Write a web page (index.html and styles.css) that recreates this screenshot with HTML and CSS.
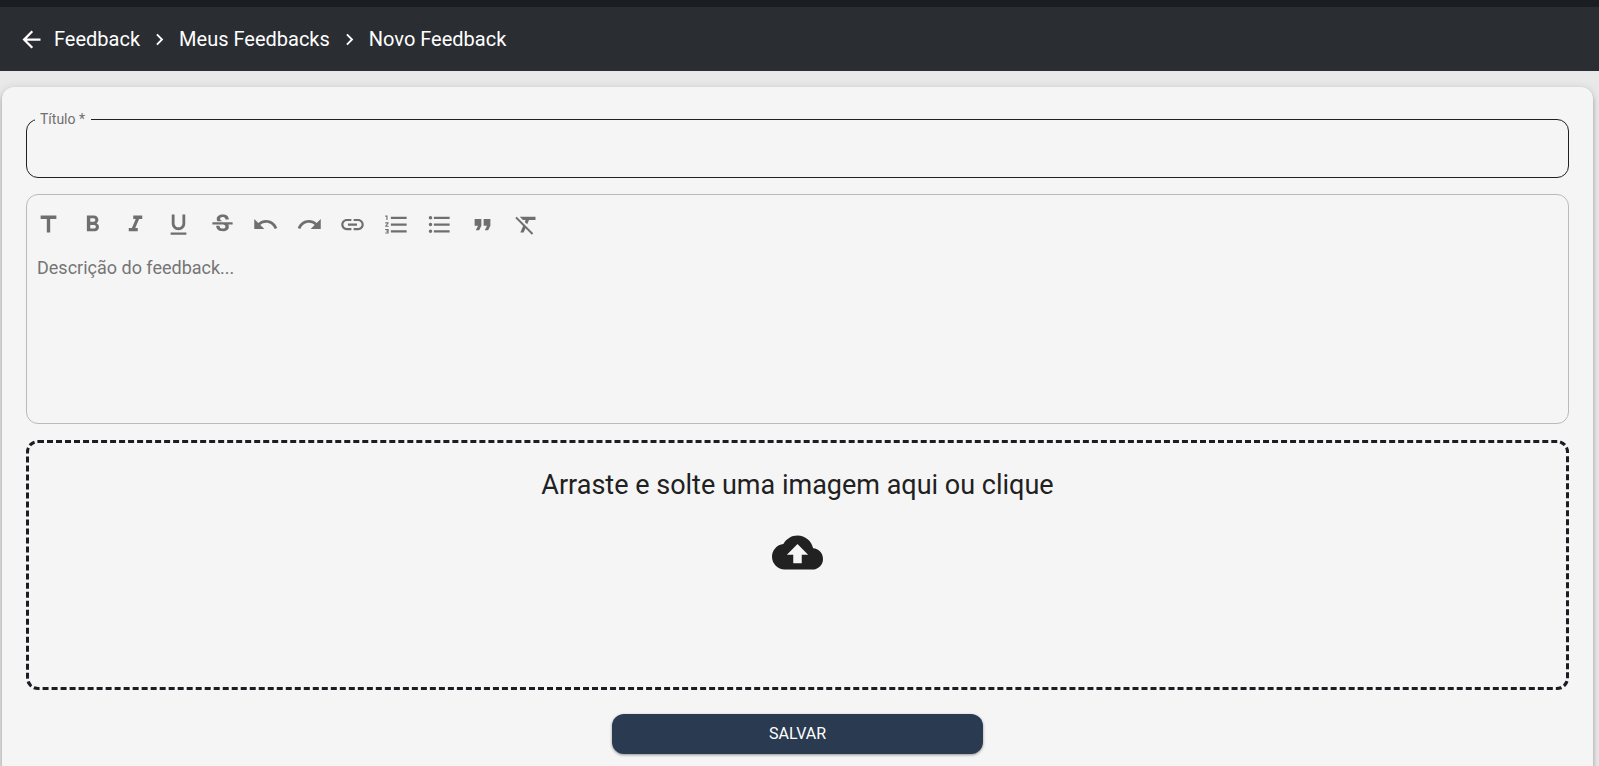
FILE: index.html
```html
<!DOCTYPE html>
<html lang="pt-BR">
<head>
<meta charset="utf-8">
<title>Novo Feedback</title>
<link rel="stylesheet" href="styles.css">
</head>
<body>
<header class="topbar">
  <button type="button" class="back" aria-label="Voltar">
    <svg class="back-icon" viewBox="0 0 24 24"><path d="M20 11H7.83l5.59-5.59L12 4l-8 8 8 8 1.41-1.41L7.83 13H20v-2z"/></svg>
  </button>
  <nav class="crumbs" aria-label="Navegação">
    <a href="#feedback">Feedback</a>
    <svg class="chevron" viewBox="0 0 24 24"><path d="M10 6 8.59 7.41 13.17 12l-4.58 4.59L10 18l6-6z"/></svg>
    <a href="#meus">Meus Feedbacks</a>
    <svg class="chevron" viewBox="0 0 24 24"><path d="M10 6 8.59 7.41 13.17 12l-4.58 4.59L10 18l6-6z"/></svg>
    <a href="#novo" aria-current="page">Novo Feedback</a>
  </nav>
</header>
<main class="page">
  <form class="card">
    <fieldset class="field">
      <legend><label for="titulo">Título *</label></legend>
      <input id="titulo" class="field-input" type="text" required>
    </fieldset>
    <section class="editor">
      <div class="toolbar" role="toolbar" aria-label="Formatação">
        <button type="button" class="tool" aria-label="Título"><svg viewBox="0 0 24 24"><path d="M5 4v3h5.5v12h3V7H19V4z"/></svg></button>
        <button type="button" class="tool" aria-label="Negrito"><svg viewBox="0 0 24 24"><path d="M15.6 10.79c.97-.67 1.65-1.77 1.65-2.79 0-2.26-1.75-4-4-4H7v14h7.04c2.09 0 3.71-1.7 3.71-3.79 0-1.52-.86-2.82-2.15-3.42zM10 6.5h3c.83 0 1.5.67 1.5 1.5s-.67 1.5-1.5 1.5h-3v-3zm3.5 9H10v-3h3.5c.83 0 1.5.67 1.5 1.5s-.67 1.5-1.5 1.5z"/></svg></button>
        <button type="button" class="tool" aria-label="Itálico"><svg viewBox="0 0 24 24"><path d="M10 4v3h2.21l-3.42 8H6v3h8v-3h-2.21l3.42-8H18V4z"/></svg></button>
        <button type="button" class="tool" aria-label="Sublinhado"><svg viewBox="0 0 24 24"><path d="M12 17c3.31 0 6-2.69 6-6V3h-2.5v8c0 1.93-1.57 3.5-3.5 3.5S8.500 12.930 8.500 11V3H6v8c0 3.310 2.690 6 6 6zm-7 2v2h14v-2H5z"/></svg></button>
        <button type="button" class="tool" aria-label="Tachado"><svg viewBox="0 0 24 24"><path d="M7.240 8.750c-.26-.48-.39-1.030-.39-1.670 0-.61.13-1.160.4-1.670.26-.5.63-.93 1.110-1.290.48-.35 1.050-.63 1.700-.83.66-.19 1.390-.29 2.180-.29.810 0 1.540.11 2.210.34.660.22 1.230.54 1.690.94.470.4.830.88 1.080 1.430s.38 1.150.38 1.810h-3.010c0-.31-.05-.59-.15-.85-.09-.27-.24-.49-.44-.68-.2-.19-.45-.33-.75-.44-.3-.1-.66-.16-1.060-.16-.39 0-.74.04-1.030.13s-.53.21-.72.36c-.19.160-.34.340-.44.550-.1.210-.15.430-.15.660 0 .48.250.88.740 1.210.380.250.770.480 1.410.700H7.390c-.05-.08-.11-.17-.15-.25zM21 12v-2H3v2h9.620c.180.070.400.140.550.200.370.170.660.340.870.510s.350.360.430.570c.070.200.110.430.110.690 0 .23-.05.45-.14.660-.09.200-.23.380-.42.530-.19.150-.42.260-.71.350-.29.080-.63.130-1.010.130-.43 0-.83-.04-1.180-.13s-.66-.23-.91-.42c-.25-.19-.45-.44-.59-.75s-.25-.76-.25-1.210H6.400c0 .55.080 1.130.24 1.580s.370.850.650 1.210c.280.350.600.660.980.920.370.260.780.480 1.220.650.440.170.900.300 1.380.390.480.080.960.130 1.440.130.800 0 1.530-.09 2.180-.28s1.210-.45 1.670-.79c.460-.34.820-.77 1.070-1.270s.38-1.070.38-1.710c0-.6-.1-1.140-.31-1.610-.05-.11-.11-.23-.17-.33H21z"/></svg></button>
        <button type="button" class="tool" aria-label="Desfazer"><svg viewBox="0 0 24 24"><path d="M12.500 8c-2.650 0-5.050.990-6.900 2.600L2 7v9h9l-3.620-3.620c1.390-1.160 3.160-1.880 5.120-1.880 3.540 0 6.550 2.310 7.600 5.500l2.370-.78C21.080 11.030 17.150 8 12.500 8z"/></svg></button>
        <button type="button" class="tool" aria-label="Refazer"><svg viewBox="0 0 24 24"><path d="M18.400 10.600C16.550 8.990 14.150 8 11.500 8c-4.650 0-8.580 3.030-9.960 7.220L3.900 16c1.050-3.190 4.050-5.500 7.600-5.500 1.950 0 3.730.72 5.120 1.880L13 16h9V7l-3.600 3.600z"/></svg></button>
        <button type="button" class="tool" aria-label="Link"><svg viewBox="0 0 24 24"><path d="M3.900 12c0-1.710 1.390-3.100 3.100-3.100h4V7H7c-2.760 0-5 2.240-5 5s2.240 5 5 5h4v-1.900H7c-1.710 0-3.100-1.390-3.100-3.100zM8 13h8v-2H8v2zm9-6h-4v1.900h4c1.710 0 3.100 1.390 3.100 3.100s-1.390 3.100-3.100 3.100h-4V17h4c2.760 0 5-2.240 5-5s-2.240-5-5-5z"/></svg></button>
        <button type="button" class="tool" aria-label="Lista numerada"><svg viewBox="0 0 24 24"><path d="M2 17h2v.5H3v1h1v.5H2v1h3v-4H2v1zm1-9h1V4H2v1h1v3zm-1 3h1.800L2 13.100v.9h3v-1H3.200L5 10.900V10H2v1zm5-6v2h14V5H7zm0 14h14v-2H7v2zm0-6h14v-2H7v2z"/></svg></button>
        <button type="button" class="tool" aria-label="Lista com marcadores"><svg viewBox="0 0 24 24"><path d="M4 10.500c-.83 0-1.500.67-1.500 1.500s.67 1.500 1.500 1.500 1.500-.67 1.500-1.500-.67-1.500-1.500-1.500zm0-6c-.83 0-1.500.67-1.500 1.500S3.170 7.500 4 7.500 5.500 6.830 5.500 6 4.830 4.500 4 4.500zm0 12c-.83 0-1.500.68-1.500 1.500s.68 1.500 1.500 1.500 1.500-.68 1.500-1.500-.67-1.500-1.500-1.500zM7 19h14v-2H7v2zm0-6h14v-2H7v2zm0-8v2h14V5H7z"/></svg></button>
        <button type="button" class="tool" aria-label="Citação"><svg viewBox="0 0 24 24"><path d="M6 17h3l2-4V7H5v6h3zm8 0h3l2-4V7h-6v6h3z"/></svg></button>
        <button type="button" class="tool" aria-label="Limpar formatação"><svg viewBox="0 0 24 24"><path d="M3.270 5L2 6.270l6.970 6.970L6.500 19h3l1.570-3.660L16.730 21 18 19.730 3.550 5.270 3.270 5zM6 5v.18L8.820 8h2.400l-.72 1.680 2.100 2.100L14.210 8H20V5H6z"/></svg></button>
      </div>
      <textarea class="description" aria-label="Descrição" placeholder="Descrição do feedback..."></textarea>
    </section>
    <button type="button" class="dropzone">
      <span>Arraste e solte uma imagem aqui ou clique</span>
      <svg class="cloud" viewBox="0 0 24 24"><path d="M19.350 10.040C18.670 6.590 15.640 4 12 4 9.110 4 6.600 5.640 5.350 8.040 2.340 8.360 0 10.910 0 14c0 3.310 2.690 6 6 6h13c2.760 0 5-2.240 5-5 0-2.640-2.050-4.780-4.650-4.960zM14 13v4h-4v-4H7l5-5 5 5h-3z"/></svg>
    </button>
    <button type="submit" class="save">SALVAR</button>
  </form>
</main>
</body>
</html>
```
FILE: styles.css
```css
* {
  box-sizing: border-box;
}

body {
  margin: 0;
  height: 100vh;
  overflow: hidden;
  background: #e9e9e9;
  font-family: Roboto, "Liberation Sans", sans-serif;
  color: #212121;
}

button,
input,
textarea {
  font-family: inherit;
}

svg {
  display: block;
  fill: currentColor;
}

.topbar {
  display: flex;
  align-items: center;
  gap: 9px;
  height: 71px;
  padding: 0 18px;
  border-top: 7px solid #1a1d21;
  background: #2a2d32;
  color: #fff;
}

.back {
  padding: 0;
  border: 0;
  background: none;
  color: inherit;
}

.back-icon {
  width: 27px;
  height: 27px;
}

.crumbs {
  display: flex;
  align-items: center;
  gap: 8px;
  font-size: 20px;
  line-height: 32px;
}

.crumbs a {
  color: inherit;
  text-decoration: none;
}

.chevron {
  width: 23px;
  height: 23px;
}

.page {
  padding: 16px 6px 0 2px;
}

.card {
  display: flex;
  flex-direction: column;
  gap: 16px;
  padding: 24px;
  border-radius: 12px;
  background: #f5f5f5;
  box-shadow: 0 2px 4px -1px rgba(0, 0, 0, 0.2), 0 4px 5px 0 rgba(0, 0, 0, 0.14), 0 1px 10px 0 rgba(0, 0, 0, 0.12);
}

.field {
  min-width: 0;
  margin: 0;
  padding: 0 12px;
  border: 1px solid #212121;
  border-radius: 12px;
}

.field legend {
  margin-left: -4px;
  padding: 0 6px 0 5px;
  font-size: 14px;
  line-height: 17px;
  color: #6f6f6f;
}

.field-input {
  display: block;
  width: 100%;
  height: 49px;
  padding: 0;
  border: 0;
  outline: 0;
  background: none;
  font-size: 18px;
}

.editor {
  border: 1px solid #bababa;
  border-radius: 12px;
}

.toolbar {
  display: grid;
  grid-template-columns: repeat(12, 1fr);
  width: 521px;
  padding-top: 8px;
}

.tool {
  display: grid;
  place-items: center;
  height: 43px;
  padding: 0;
  border: 0;
  background: none;
  color: #6f6f6f;
}

.tool svg {
  width: 27px;
  height: 27px;
}

.description {
  display: block;
  width: 100%;
  height: 177px;
  padding: 9px 10px;
  border: 0;
  outline: 0;
  resize: none;
  background: none;
  font-size: 18px;
  line-height: 26px;
}

.description::placeholder {
  color: #757575;
  opacity: 1;
}

.dropzone {
  display: flex;
  flex-direction: column;
  align-items: center;
  gap: 24px;
  width: 100%;
  min-height: 250px;
  padding: 24px;
  border: 3px dashed #1a1d21;
  border-radius: 12px;
  background: none;
  color: #212121;
  font-size: 27px;
  line-height: 36px;
}

.cloud {
  width: 51px;
  height: 51px;
}

.save {
  align-self: center;
  width: 24%;
  height: 40px;
  margin-top: 8px;
  padding: 0 0 2px;
  border: 0;
  border-radius: 12px;
  background: #2a3a50;
  color: #fff;
  font-size: 16px;
  box-shadow: 0 1px 3px rgba(0, 0, 0, 0.4);
}
```
